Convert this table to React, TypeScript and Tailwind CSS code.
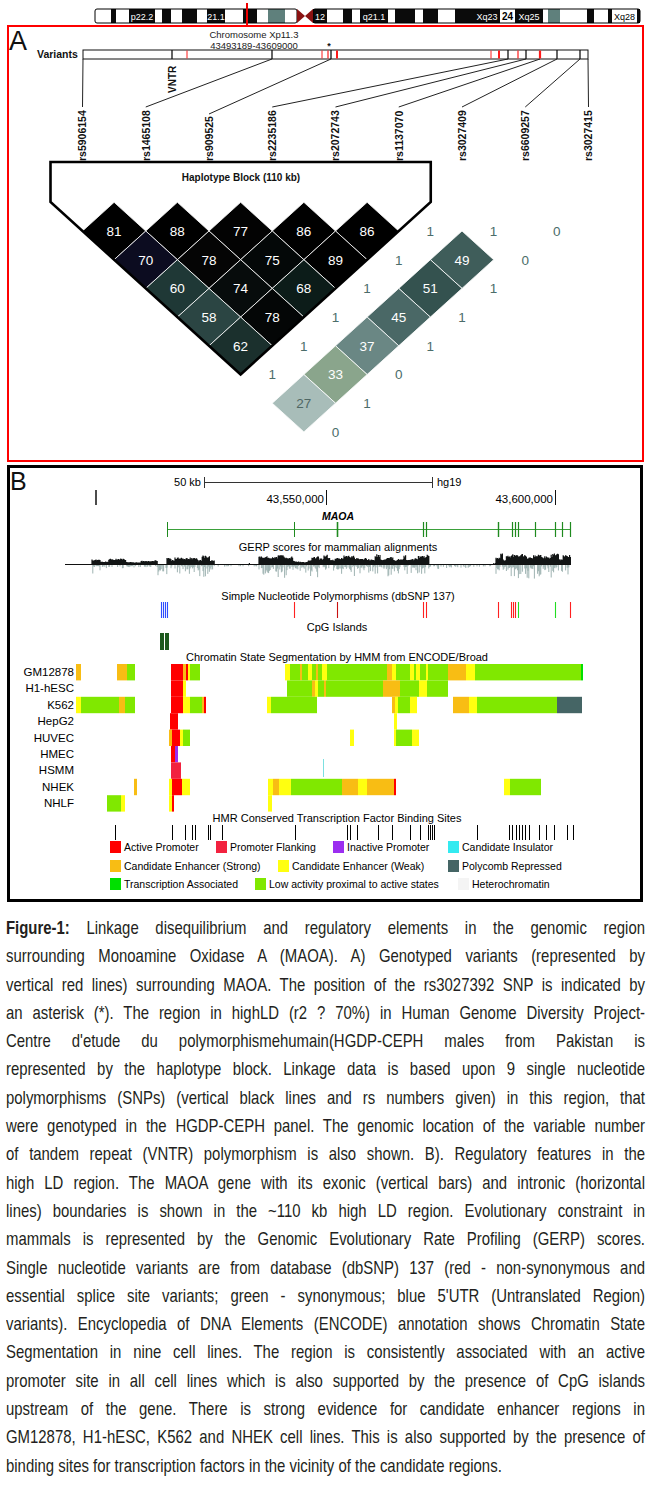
import React from 'react';

// ---------- shared ----------
const COL: Record<string, string> = {
  ap: '#ff0000',
  pf: '#f2223f',
  ip: '#9b2ef0',
  ci: '#33eaf0',
  es: '#f8bd14',
  ew: '#ffff10',
  pr: '#456565',
  ta: '#00e000',
  la: '#80e800',
  ht: '#f4f4f4',
};

function rand(seed: number) {
  let s = seed;
  return () => {
    s = (s * 16807) % 2147483647;
    return s / 2147483647;
  };
}

// ---------- chromosome ideogram ----------
type Band = [number, number, 'w' | 'k' | 'g', string?];

const BANDS: Band[] = [
  [95, 111, 'w'], [111, 116, 'k'], [116, 129, 'w'], [129, 155, 'k', 'p22.2'], [155, 162, 'w'],
  [162, 171, 'k'], [171, 182, 'w'], [182, 197, 'k'], [197, 207, 'w'], [207, 225, 'k', '21.1'],
  [225, 243, 'w'], [243, 257, 'k'], [257, 268, 'w'], [268, 285, 'g'], [285, 297, 'w'],
  [313, 327, 'k', '12'], [327, 343, 'w'], [343, 352, 'k'], [352, 360, 'w'], [360, 388, 'k', 'q21.1'],
  [388, 395, 'w'], [395, 415, 'k'], [415, 423, 'w'], [423, 438, 'k'], [438, 455, 'w'],
  [455, 474, 'k'], [474, 500, 'k', 'Xq23'], [500, 515, 'w', '24'], [515, 543, 'k', 'Xq25'],
  [543, 548, 'w'], [548, 560, 'g'], [560, 587, 'w'], [587, 594, 'k'], [594, 608, 'w'],
  [608, 612, 'k'], [612, 637, 'w', 'Xq28'], [637, 640, 'k'],
];

function Ideogram() {
  return (
    <svg width={650} height={25} viewBox="0 0 650 25" className="block font-['Liberation_Sans',Arial,sans-serif]">
      {BANDS.map(([a, b, c, label], i) => (
        <g key={i}>
          <rect x={a} y={9} width={b - a} height={14} fill={c === 'w' ? '#fff' : c === 'k' ? '#0b0b0b' : '#5f807c'} />
          {label && (
            <text
              x={(a + b) / 2}
              y={19.6}
              textAnchor="middle"
              fontSize={label === '24' ? 10 : 9}
              fontWeight={label === '24' ? 'bold' : 'normal'}
              fill={c === 'w' ? '#000' : '#fff'}
            >
              {label}
            </text>
          )}
        </g>
      ))}
      <rect x={95} y={9} width={202} height={14} rx={2} fill="none" stroke="#000" strokeWidth={1} />
      <rect x={313} y={9} width={327} height={14} rx={2} fill="none" stroke="#000" strokeWidth={1} />
      <polygon points="297,9 305,16 297,23" fill="#8a1212" />
      <polygon points="313,9 305,16 313,23" fill="#8a1212" />
      <line x1={247} y1={3} x2={247} y2={25} stroke="#ee0000" strokeWidth={2} />
    </svg>
  );
}

// ---------- panel A ----------
const XS = Array.from({ length: 9 }, (_, k) => 82.5 + 63.25 * k);
const HW = 31.625;
const HH = 28.7;
const Y0 = 231;

const RS = ['rs5906154', 'rs1465108', 'rs909525', 'rs2235186', 'rs2072743', 'rs1137070', 'rs3027409', 'rs6609257', 'rs3027415'];
const FROM = [83, 272, 331, 508, 526, 540, 557, 580, 588];

const BLACK_TICKS = [172, 272, 331, 508, 526, 557, 580];
const RED_TICKS: [number, number][] = [[187, 1], [322, 1], [328, 1.2], [337, 2], [491, 1], [499, 2], [518, 1.2], [540, 2.2]];

// i, j, value, fill, text colour
const FILLED: [number, number, number, string, string][] = [
  [0, 1, 81, '#000000', '#fff'], [1, 2, 88, '#000000', '#fff'], [2, 3, 77, '#030303', '#fff'], [3, 4, 86, '#000000', '#fff'], [4, 5, 86, '#000000', '#fff'],
  [0, 2, 70, '#0c0c20', '#fff'], [1, 3, 78, '#050505', '#fff'], [2, 4, 75, '#040808', '#fff'], [3, 5, 89, '#000000', '#fff'],
  [0, 3, 60, '#1f3836', '#fff'], [1, 4, 74, '#070c0c', '#fff'], [2, 5, 68, '#0c1c19', '#fff'],
  [0, 4, 58, '#2b4543', '#fff'], [1, 5, 78, '#040606', '#fff'],
  [0, 5, 62, '#1b302d', '#fff'],
  [5, 7, 49, '#3f5d5a', '#fff'], [4, 7, 51, '#34524f', '#fff'], [3, 7, 45, '#4a6866', '#fff'],
  [2, 7, 37, '#6a8784', '#fff'], [1, 7, 33, '#8aa58c', '#fff'], [0, 7, 27, '#a8bdb9', '#4f6764'],
];

const PLAIN: [number, number, string][] = [
  [5, 6, '1'], [6, 7, '1'], [7, 8, '0'], [4, 6, '1'], [6, 8, '0'], [3, 6, '1'], [5, 8, '1'], [2, 6, '1'],
  [4, 8, '1'], [1, 6, '1'], [3, 8, '1'], [0, 6, '1'], [2, 8, '0'], [1, 8, '1'], [0, 8, '0'],
];

function cellAt(i: number, j: number) {
  return { cx: (XS[i] + XS[j]) / 2, cy: Y0 + (j - i - 1) * HH };
}

function diamond(cx: number, cy: number) {
  return `${cx},${cy - HH} ${cx + HW},${cy} ${cx},${cy + HH} ${cx - HW},${cy}`;
}

function PanelA() {
  const left = XS[0] - 32;
  const right = XS[5] + 32;
  const tipX = (XS[0] + XS[5]) / 2;
  const tipY = Y0 + 4 * HH + HH;
  const topDiag = Y0 - 32 * (HH / HW);

  return (
    <div className="ml-[7px] w-[637px] h-[437px] border-2 border-[#ff0000] font-['Liberation_Sans',Arial,sans-serif]">
      <svg width={633} height={433} viewBox="9 27 633 433" className="block">
        <text x={9} y={50} fontSize={27} fill="#111">A</text>
        <text x={254} y={38} fontSize={9.5} textAnchor="middle" fill="#222">Chromosome Xp11.3</text>
        <text x={254} y={49} fontSize={9.5} textAnchor="middle" fill="#222">43493189-43609000</text>
        <text x={37} y={58} fontSize={10.5} fontWeight="bold" fill="#111">Variants</text>

        {/* variant bar */}
        <rect x={83} y={50} width={505} height={9} fill="#fff" stroke="#111" strokeWidth={1} />
        {BLACK_TICKS.map((x) => (
          <line key={'b' + x} x1={x} y1={50} x2={x} y2={59} stroke="#111" strokeWidth={1.3} />
        ))}
        {RED_TICKS.map(([x, w]) => (
          <line key={'r' + x} x1={x} y1={50.5} x2={x} y2={58.5} stroke="#ff1a1a" strokeWidth={w} />
        ))}
        <text x={329} y={49} fontSize={9} fontWeight="bold" textAnchor="middle" fill="#111">*</text>

        <text transform="translate(175.5,93) rotate(-90)" fontSize={10} fontWeight="bold" fill="#111">VNTR</text>

        {RS.map((rs, k) => (
          <g key={rs}>
            <line x1={FROM[k]} y1={59} x2={XS[k]} y2={k === 2 ? 114 : 107} stroke="#222" strokeWidth={1} />
            <text transform={`translate(${XS[k] + 3.8},161) rotate(-90)`} fontSize={10.5} fontWeight="bold" fill="#111">
              {rs}
            </text>
          </g>
        ))}

        {/* LD diamonds */}
        {FILLED.map(([i, j, v, fill, tc]) => {
          const { cx, cy } = cellAt(i, j);
          return (
            <g key={`${i}-${j}`}>
              <polygon points={diamond(cx, cy)} fill={fill} stroke="#fff" strokeWidth={0.8} />
              <text x={cx} y={cy + 4.8} fontSize={13.5} textAnchor="middle" fill={tc}>{v}</text>
            </g>
          );
        })}
        {PLAIN.map(([i, j, v]) => {
          const { cx, cy } = cellAt(i, j);
          return (
            <text key={`p${i}-${j}`} x={cx} y={cy + 4.8} fontSize={13.5} textAnchor="middle" fill="#4b6d6a">{v}</text>
          );
        })}

        {/* haplotype block outline */}
        <polygon
          points={`${left},${topDiag} ${left},162 ${right},162 ${right},${topDiag} ${tipX},${tipY}`}
          fill="none"
          stroke="#000"
          strokeWidth={2.6}
          strokeLinejoin="miter"
        />
        <text x={241} y={181} fontSize={10} fontWeight="bold" textAnchor="middle" fill="#111">Haplotype Block (110 kb)</text>
      </svg>
    </div>
  );
}

// ---------- panel B ----------
// x0, x1, max height up, max depth down
const GERP_ZONES: [number, number, number, number][] = [
  [65, 92, 1, 1],
  [92, 100, 7, 12],
  [100, 126, 6, 6],
  [126, 158, 4, 4],
  [158, 167, 2, 16],
  [167, 215, 9, 14],
  [215, 259, 1, 2],
  [259, 293, 9, 15],
  [293, 312, 5, 14],
  [312, 429, 10, 13],
  [429, 496, 1, 4],
  [496, 571, 11, 15],
];

function gerpPaths() {
  const r = rand(1234567);
  let up = '';
  let down = '';
  for (const [a, b, hu, hd] of GERP_ZONES) {
    let x = a;
    while (x < b) {
      // bars come in small blocks of similar height
      const len = 2 + r() * 7;
      const block = hu * (0.4 + 0.6 * r());
      const end = Math.min(b, x + len);
      for (; x < end; x += 0.8) {
        const u = block * (0.7 + 0.3 * r());
        const d = hd * r() * r();
        if (u > 0.9) up += `M${x.toFixed(1)} 564V${(564 - u).toFixed(1)}`;
        if (d > 1) down += `M${x.toFixed(1)} 565V${(565 + d).toFixed(1)}`;
      }
    }
  }
  return { up, down };
}
const GERP = gerpPaths();

const EXONS: [number, number][] = [
  [167.5, 1], [294.5, 1], [337.5, 1.6], [423.5, 1.2], [426.5, 1.2], [498.5, 1.4], [512.5, 1.2], [515.5, 1.2], [518.5, 1.2],
  [535.5, 1.2], [555.5, 1.2], [562.5, 1.2], [570.5, 1.2],
];

const SNPS: [number, string][] = [
  [161.5, '#2f4dff'], [163.5, '#2f4dff'], [165.5, '#2f4dff'], [167.5, '#2f4dff'],
  [294.5, '#ff2020'], [337.5, '#c81010'], [423.5, '#ff2020'], [426.5, '#ff2020'], [498.5, '#ff2020'],
  [511.5, '#ff2020'], [513.5, '#ff2020'], [515.5, '#ff2020'], [518.5, '#22dd22'], [555.5, '#22dd22'], [570.5, '#ff2020'],
];

const CELLS: [string, [number, number, string][]][] = [
  ['GM12878', [
    [76, 81, 'es'], [117, 127, 'es'], [127, 135, 'la'], [171, 183, 'ap'], [183, 186, 'es'], [186, 188, 'ap'], [188, 190, 'ew'],
    [190, 200, 'la'], [285, 290, 'ew'], [290, 300, 'la'], [300, 302, 'es'], [302, 308, 'la'], [308, 312, 'ew'], [312, 316, 'la'],
    [316, 318, 'es'], [318, 322, 'la'], [322, 327, 'ew'], [327, 387, 'la'], [387, 392, 'es'], [392, 396, 'ew'], [396, 410, 'la'],
    [410, 414, 'ew'], [414, 416, 'la'], [416, 420, 'ew'], [420, 426, 'la'], [426, 428, 'ew'], [428, 448, 'la'], [448, 466, 'es'],
    [466, 475, 'ew'], [475, 581, 'la'], [581, 583, 'ta'],
  ]],
  ['H1-hESC', [
    [171, 183, 'ap'], [183, 186, 'ew'], [287, 312, 'la'], [312, 315, 'es'], [315, 318, 'ew'], [318, 324, 'la'], [324, 326, 'es'],
    [326, 383, 'la'], [383, 400, 'es'], [400, 419, 'la'], [419, 427, 'ew'], [427, 448, 'la'],
  ]],
  ['K562', [
    [76, 81, 'ew'], [81, 119, 'la'], [119, 125, 'es'], [125, 135, 'la'], [171, 183, 'ap'], [183, 190, 'ew'], [190, 202, 'la'],
    [202, 204, 'es'], [204, 206, 'ap'], [267, 271, 'ew'], [271, 317, 'la'], [392, 395, 'es'], [395, 398, 'ew'], [398, 410, 'la'],
    [410, 417, 'ew'], [453, 469, 'es'], [469, 477, 'ew'], [477, 557, 'la'], [557, 582, 'pr'],
  ]],
  ['HepG2', [[170, 178, 'ap'], [394, 397, 'ew']]],
  ['HUVEC', [
    [169, 172, 'es'], [172, 180, 'ap'], [180, 183, 'ew'], [183, 190, 'la'], [350, 354, 'ew'], [394, 396, 'ew'], [396, 412, 'la'],
    [412, 419, 'ew'],
  ]],
  ['HMEC', [[171, 175, 'ap'], [175, 178, 'ip']]],
  ['HSMM', [[171, 181, 'pf']]],
  ['NHEK', [
    [134, 137, 'es'], [169, 172, 'ew'], [172, 182, 'ap'], [182, 190, 'ew'], [268, 273, 'ew'], [273, 279, 'es'], [279, 291, 'ew'],
    [291, 342, 'la'], [342, 358, 'es'], [358, 367, 'ew'], [367, 394, 'es'], [394, 396, 'ap'], [504, 510, 'ew'], [510, 541, 'la'],
  ]],
  ['NHLF', [[107, 121, 'la'], [121, 125, 'ew'], [169, 172, 'ew'], [172, 174, 'ap'], [268, 272, 'ew']]],
];

const TFBS = [
  115, 172, 185, 192, 195, 208, 210, 222, 295, 347, 350, 357, 378, 392, 410, 420, 428, 430, 432, 434, 477, 509, 512, 516,
  519, 522, 525, 529, 539, 546, 554, 567, 573,
];

const LEGEND: [number, number, string, string][] = [
  [110, 847, 'ap', 'Active Promoter'],
  [216, 847, 'pf', 'Promoter Flanking'],
  [333, 847, 'ip', 'Inactive Promoter'],
  [448, 847, 'ci', 'Candidate Insulator'],
  [110, 866, 'es', 'Candidate Enhancer (Strong)'],
  [278, 866, 'ew', 'Candidate Enhancer (Weak)'],
  [448, 866, 'pr', 'Polycomb Repressed'],
  [110, 884, 'ta', 'Transcription Associated'],
  [255, 884, 'la', 'Low activity proximal to active states'],
  [458, 884, 'ht', 'Heterochromatin'],
];

function PanelB() {
  return (
    <div className="mt-[3px] ml-[7px] w-[636px] h-[437px] border-[3px] border-black font-['Liberation_Sans',Arial,sans-serif]">
      <svg width={630} height={431} viewBox="10 468 630 431" className="block">
        <text x={10} y={490} fontSize={25} fill="#111">B</text>

        {/* ruler */}
        <text x={201} y={486} fontSize={11} textAnchor="end" fill="#000">50 kb</text>
        <line x1={204} y1={482.5} x2={432} y2={482.5} stroke="#333" strokeWidth={1} />
        <line x1={204.5} y1={477} x2={204.5} y2={488} stroke="#333" strokeWidth={1} />
        <line x1={432.5} y1={477} x2={432.5} y2={488} stroke="#333" strokeWidth={1} />
        <text x={437} y={486} fontSize={11} fill="#000">hg19</text>
        <line x1={96} y1={490} x2={96} y2={505} stroke="#111" strokeWidth={1.5} />
        <text x={324} y={503} fontSize={11.5} textAnchor="end" fill="#000">43,550,000</text>
        <line x1={326.5} y1={490} x2={326.5} y2={505} stroke="#111" strokeWidth={1} />
        <text x={553} y={503} fontSize={11.5} textAnchor="end" fill="#000">43,600,000</text>
        <line x1={555.5} y1={490} x2={555.5} y2={505} stroke="#111" strokeWidth={1} />

        {/* gene */}
        <text x={338} y={520} fontSize={10.5} fontStyle="italic" fontWeight="bold" textAnchor="middle" fill="#000">MAOA</text>
        <line x1={167} y1={529.5} x2={570} y2={529.5} stroke="#3aa03a" strokeWidth={1} />
        {EXONS.map(([x, w]) => (
          <line key={'e' + x} x1={x} y1={522} x2={x} y2={537} stroke="#1f8a1f" strokeWidth={w} />
        ))}

        {/* GERP */}
        <text x={338} y={551} fontSize={11} textAnchor="middle" fill="#000">GERP scores for mammalian alignments</text>
        <path d={GERP.down} stroke="#93aaa8" strokeWidth={0.9} />
        <path d={GERP.up} stroke="#121515" strokeWidth={1.2} />
        <line x1={65} y1={564.5} x2={571} y2={564.5} stroke="#111" strokeWidth={1.2} />

        {/* SNPs */}
        <text x={338} y={600} fontSize={11} textAnchor="middle" fill="#000">Simple Nucleotide Polymorphisms (dbSNP 137)</text>
        {SNPS.map(([x, c], i) => (
          <line key={'s' + i} x1={x} y1={602} x2={x} y2={618} stroke={c} strokeWidth={1.1} />
        ))}

        {/* CpG */}
        <text x={337} y={631} fontSize={11} textAnchor="middle" fill="#000">CpG Islands</text>
        <rect x={160} y={633} width={4} height={17} fill="#1d5a1d" />
        <rect x={165} y={633} width={4} height={17} fill="#1d5a1d" />

        {/* chromatin states */}
        <text x={337} y={661} fontSize={11} textAnchor="middle" fill="#000">Chromatin State Segmentation by HMM from ENCODE/Broad</text>
        {CELLS.map(([name, segs], r) => {
          const top = 664 + r * 16.4;
          return (
            <g key={name}>
              <text x={74} y={top + 12} fontSize={11.5} textAnchor="end" fill="#000">{name}</text>
              {segs.map(([a, b, c], k) => (
                <rect key={k} x={a} y={top} width={b - a} height={16.4} fill={COL[c]} />
              ))}
            </g>
          );
        })}
        <line x1={323.5} y1={759} x2={323.5} y2={777} stroke="#5ad8d8" strokeWidth={0.8} />

        {/* TFBS */}
        <text x={337} y={822} fontSize={11} textAnchor="middle" fill="#000">HMR Conserved Transcription Factor Binding Sites</text>
        {TFBS.map((x) => (
          <line key={'t' + x} x1={x + 0.5} y1={825} x2={x + 0.5} y2={840} stroke="#000" strokeWidth={1} />
        ))}

        {/* legend */}
        {LEGEND.map(([x, y, c, label]) => (
          <g key={label}>
            <rect x={x} y={y - 6} width={11} height={12} fill={COL[c]} />
            <text x={x + 14} y={y + 4} fontSize={10.5} fill="#000">{label}</text>
          </g>
        ))}
      </svg>
    </div>
  );
}

// ---------- caption ----------
const LINES = [
  'surrounding Monoamine Oxidase A (MAOA).   A) Genotyped variants (represented by',
  'vertical red lines) surrounding MAOA. The position of the rs3027392 SNP is indicated by',
  'an asterisk (*).  The region in highLD (r2 ? 70%) in Human Genome Diversity Project-',
  "Centre d'etude du polymorphismehumain(HGDP-CEPH males from Pakistan is",
  'represented by the haplotype block. Linkage data is based upon 9 single nucleotide',
  'polymorphisms (SNPs) (vertical black lines and rs numbers given) in this region, that',
  'were genotyped in the HGDP-CEPH panel. The genomic location of the variable number',
  'of tandem repeat (VNTR) polymorphism is also shown.  B). Regulatory features in the',
  'high LD region.  The MAOA gene with its exonic (vertical bars) and intronic (horizontal',
  'lines) boundaries is shown in the ~110 kb high LD region.  Evolutionary constraint in',
  'mammals is represented by the Genomic Evolutionary Rate Profiling (GERP) scores.',
  'Single nucleotide variants are from database (dbSNP) 137 (red - non-synonymous and',
  "essential splice site variants; green - synonymous; blue 5'UTR (Untranslated Region)",
  'variants).  Encyclopedia of DNA Elements (ENCODE) annotation shows Chromatin State',
  'Segmentation in nine cell lines.  The region is consistently associated with an active',
  'promoter site in all cell lines which is also supported by the presence of CpG islands',
  'upstream of the gene.  There is strong evidence for candidate enhancer regions in',
  'GM12878, H1-hESC, K562 and NHEK cell lines. This is also supported by the presence of',
];

// the caption face is condensed; Arial-width glyphs are squeezed horizontally to match
const LINE = 'w-[814px] origin-left scale-x-[0.785] whitespace-nowrap';

function Caption() {
  return (
    <div className="mt-[12px] pl-[6px] pb-[8px] overflow-hidden font-['Liberation_Sans',Arial,sans-serif] text-[19px] leading-[28.3px] text-[#231f20]">
      <div className={`${LINE} text-justify [text-align-last:justify]`}>
        <span className="font-bold">Figure-1:</span> Linkage disequilibrium and regulatory elements in the genomic region
      </div>
      {LINES.map((line, i) => (
        <div key={i} className={`${LINE} text-justify [text-align-last:justify]`}>
          {line}
        </div>
      ))}
      <div className={LINE}>binding sites for transcription factors in the vicinity of the candidate regions.</div>
    </div>
  );
}

export default function App() {
  return (
    <div className="w-[650px] min-h-[1488px] bg-white text-black">
      <Ideogram />
      <PanelA />
      <PanelB />
      <Caption />
    </div>
  );
}
